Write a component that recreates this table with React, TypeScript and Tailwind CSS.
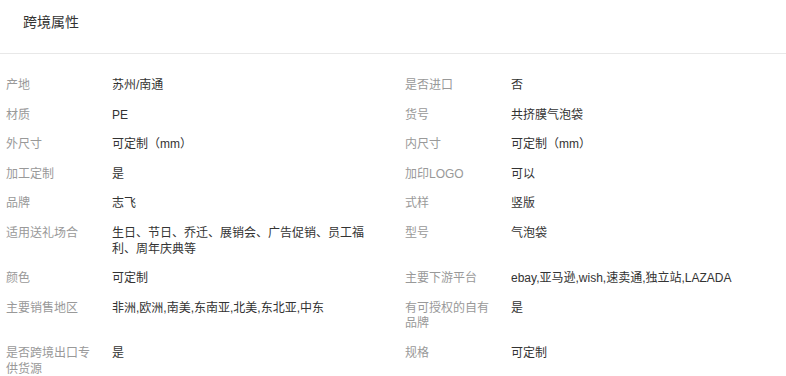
import React from 'react';

type Attr = { label: string; value: string };

const rows: [Attr, Attr][] = [
    [{ label: '产地', value: '苏州/南通' }, { label: '是否进口', value: '否' }],
    [{ label: '材质', value: 'PE' }, { label: '货号', value: '共挤膜气泡袋' }],
    [{ label: '外尺寸', value: '可定制（mm）' }, { label: '内尺寸', value: '可定制（mm）' }],
    [{ label: '加工定制', value: '是' }, { label: '加印LOGO', value: '可以' }],
    [{ label: '品牌', value: '志飞' }, { label: '式样', value: '竖版' }],
    [
        { label: '适用送礼场合', value: '生日、节日、乔迁、展销会、广告促销、员工福利、周年庆典等' },
        { label: '型号', value: '气泡袋' },
    ],
    [{ label: '颜色', value: '可定制' }, { label: '主要下游平台', value: 'ebay,亚马逊,wish,速卖通,独立站,LAZADA' }],
    [{ label: '主要销售地区', value: '非洲,欧洲,南美,东南亚,北美,东北亚,中东' }, { label: '有可授权的自有品牌', value: '是' }],
    [{ label: '是否跨境出口专供货源', value: '是' }, { label: '规格', value: '可定制' }],
];

const Cell: React.FC<{ item: Attr }> = ({ item }) => (
    <div className="flex items-start">
        <div className="w-[90px] mr-[16px] shrink-0 text-[#999]">{item.label}</div>
        <div className="w-[262px] text-[#333]">{item.value}</div>
    </div>
);

export default function App() {
    return (
        <div
            className="w-[786px] h-[376px] overflow-hidden bg-white"
            style={{ fontFamily: '"Liberation Sans", "Noto Sans CJK SC", sans-serif' }}
        >
            {/* 标题 */}
            <div className="h-[54px] border-b border-[#e8e8e8] pl-[23px] pt-[12px]">
                <h2 className="text-[14px] leading-[20px] text-[#333]">跨境属性</h2>
            </div>

            {/* 属性列表 */}
            <div className="pl-[6px] pt-[17px] text-[12px] leading-[1.3]">
                {rows.map(([left, right], i) => (
                    <div key={i} className="grid grid-cols-[399px_1fr] py-[7px]">
                        <Cell item={left} />
                        <Cell item={right} />
                    </div>
                ))}
            </div>
        </div>
    );
}
